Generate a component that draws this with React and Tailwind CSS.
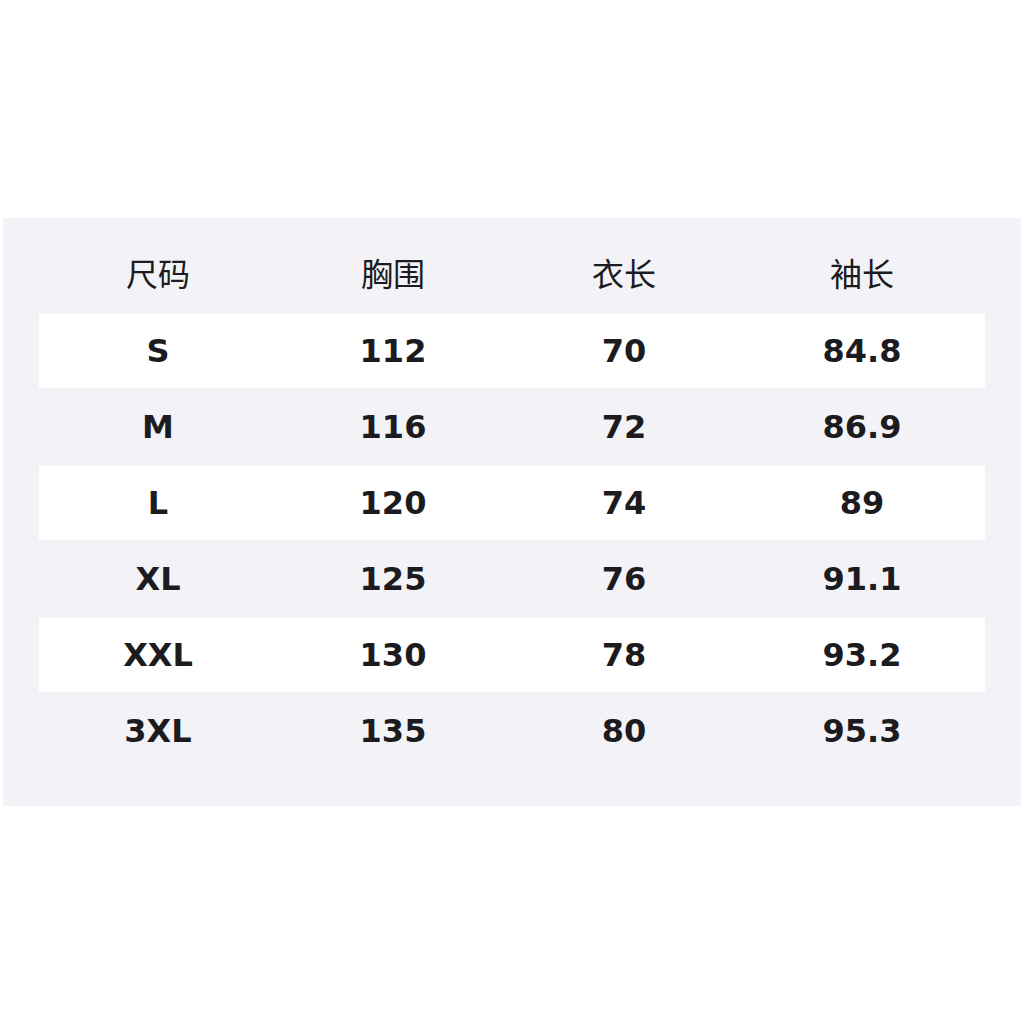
import React from "react";

const rows = [
  ["S", "112", "70", "84.8"],
  ["M", "116", "72", "86.9"],
  ["L", "120", "74", "89"],
  ["XL", "125", "76", "91.1"],
  ["XXL", "130", "78", "93.2"],
  ["3XL", "135", "80", "95.3"],
];

const cols = "grid grid-cols-[238px_232px_230px_246px]";

export default function App() {
  return (
    <div className="h-[1024px] w-[1024px] bg-white flex items-center justify-center">
      <div
        className="w-[1018px] bg-[#f3f3f7] px-[36px] pt-[19px] pb-[37px] text-[#1b1b20]"
        style={{ fontFamily: '"DejaVu Sans", "Noto Sans CJK SC", sans-serif' }}
      >
        <div className={`${cols} h-[76px] pb-[6px] items-center text-[32px] font-normal`}>
          {["尺码", "胸围", "衣长", "袖长"].map((h) => (
            <div key={h} className="text-center" style={{ fontFamily: '"Noto Sans CJK SC", sans-serif' }}>
              {h}
            </div>
          ))}
        </div>
        {rows.map((r, i) => (
          <div
            key={r[0]}
            className={
              i % 2 === 0
                ? `${cols} my-px h-[74px] items-center bg-white text-[32px] font-bold`
                : `${cols} h-[76px] items-center text-[32px] font-bold`
            }
          >
            {r.map((c, j) => (
              <div key={j} className="text-center">
                {c}
              </div>
            ))}
          </div>
        ))}
      </div>
    </div>
  );
}
